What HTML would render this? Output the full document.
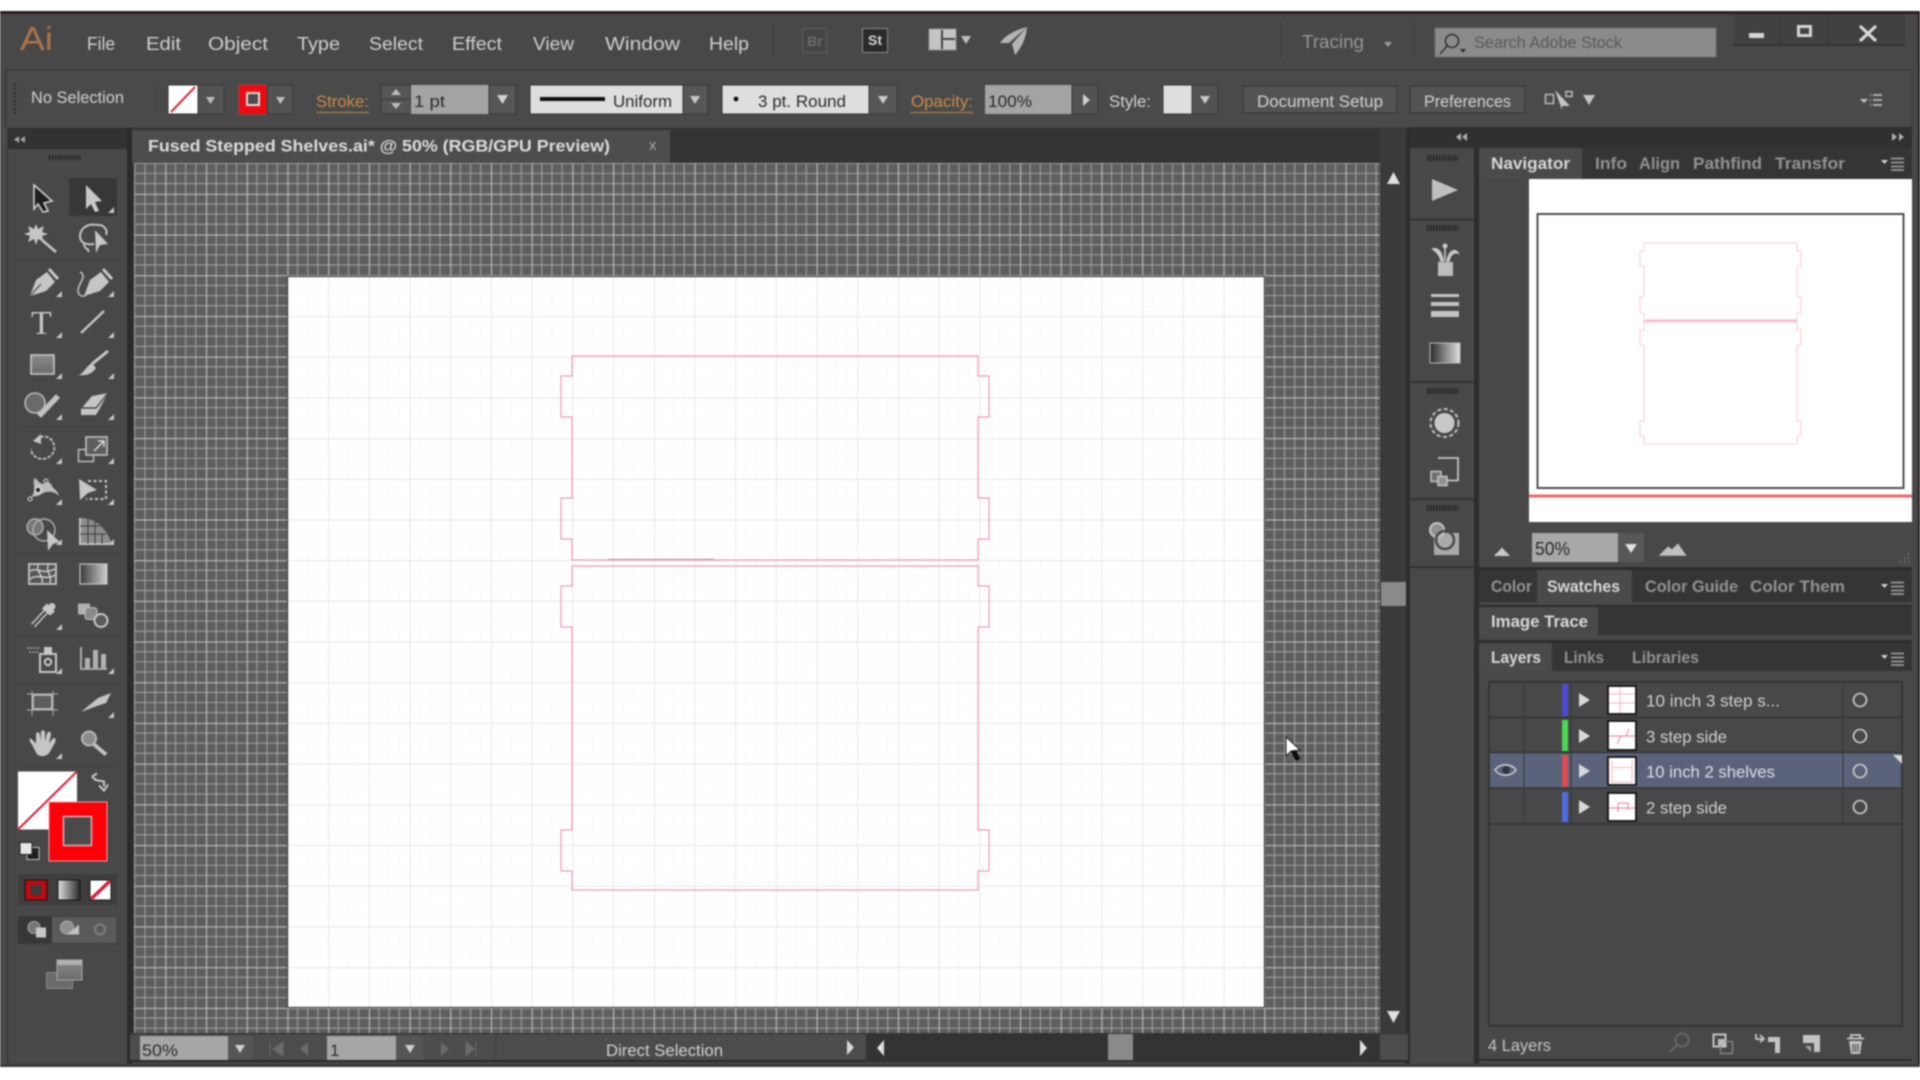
<!DOCTYPE html>
<html lang="en"><head><meta charset="utf-8"><title>Adobe Illustrator</title>
<style>
html,body{margin:0;padding:0;background:#fff;width:1920px;height:1080px;overflow:hidden}
svg{display:block;filter:blur(.7px)}
text{font-family:"Liberation Sans",sans-serif;white-space:pre}
.m{font-size:18px;fill:#cfcfcf}
.c{font-size:17px;fill:#d2d2d2}
.d{font-size:17px;fill:#2a2a2a}
.o{font-size:17px;fill:#c58a4a}
.ta{font-size:16.5px;font-weight:bold;fill:#d8d8d8}
.ti{font-size:16.5px;font-weight:bold;fill:#929292}
.l{font-size:17px;fill:#cfcfcf}
.i{fill:#c6c6c6}
.s{fill:none;stroke:#c6c6c6;stroke-width:2}
</style></head><body>
<svg width="1920" height="1080" viewBox="0 0 1920 1080" xmlns="http://www.w3.org/2000/svg">
<defs>
<pattern id="g1" patternUnits="userSpaceOnUse" x="206" y="275.2" width="40.7" height="40.7">
<rect width="40.7" height="40.7" fill="#5e5e5e"/>
<path d="M10.2 0V40.7M20.35 0V40.7M30.5 0V40.7M0 10.2H40.7M0 20.35H40.7M0 30.5H40.7" stroke="#a0a0a0" stroke-width="1.1"/>
<path d="M.5 0V40.7M0 .5H40.7" stroke="#bcbcbc" stroke-width="1.3"/>
</pattern>
<pattern id="g2" patternUnits="userSpaceOnUse" x="206" y="275.2" width="40.7" height="40.7">
<rect width="40.7" height="40.7" fill="#fff"/>
<path d="M10.2 0V40.7M20.35 0V40.7M30.5 0V40.7M0 10.2H40.7M0 20.35H40.7M0 30.5H40.7" stroke="#fafafa" stroke-width="1"/>
<path d="M.5 0V40.7M0 .5H40.7" stroke="#e9e9e9" stroke-width="1.2"/>
</pattern>
<linearGradient id="lg" x1="0" x2="1" y1="0" y2="0"><stop offset="0" stop-color="#2a2a2a"/><stop offset="1" stop-color="#e0e0e0"/></linearGradient>
<linearGradient id="lg2" x1="0" x2="1" y1="0" y2="0"><stop offset="0" stop-color="#3a3a3a"/><stop offset="1" stop-color="#d0d0d0"/></linearGradient>
<linearGradient id="lg3" x1="0" x2="0" y1="0" y2="1"><stop offset="0" stop-color="#8a8a8a"/><stop offset="1" stop-color="#6a6a6a"/></linearGradient>
</defs>

<!-- window frame -->
<rect x="0" y="11" width="1920" height="1056" fill="#484848"/>
<rect x="0" y="11" width="1920" height="3" fill="#2a1c22"/>
<rect x="1918" y="11" width="2" height="1056" fill="#241c20"/>
<rect x="0" y="1064" width="1920" height="3" fill="#3a3a3a"/>

<!-- title bar -->
<text x="20" y="50" style="font-size:33px;fill:#a87448" textLength="33" lengthAdjust="spacingAndGlyphs">Ai</text>
<text class="m" x="87" y="50" textLength="28" lengthAdjust="spacingAndGlyphs">File</text>
<text class="m" x="146" y="50" textLength="35" lengthAdjust="spacingAndGlyphs">Edit</text>
<text class="m" x="208" y="50" textLength="60" lengthAdjust="spacingAndGlyphs">Object</text>
<text class="m" x="297" y="50" textLength="43" lengthAdjust="spacingAndGlyphs">Type</text>
<text class="m" x="369" y="50" textLength="54" lengthAdjust="spacingAndGlyphs">Select</text>
<text class="m" x="452" y="50" textLength="50" lengthAdjust="spacingAndGlyphs">Effect</text>
<text class="m" x="533" y="50" textLength="41" lengthAdjust="spacingAndGlyphs">View</text>
<text class="m" x="605" y="50" textLength="75" lengthAdjust="spacingAndGlyphs">Window</text>
<text class="m" x="709" y="50" textLength="40" lengthAdjust="spacingAndGlyphs">Help</text>
<rect x="773" y="23" width="1" height="34" fill="#3b3b3b"/>
<rect x="802.5" y="28.5" width="24" height="24" fill="#454545" stroke="#5e5e5e"/>
<text x="807" y="46" style="font-size:14px;fill:#6a6a6a;font-weight:bold">Br</text>
<rect x="862.5" y="28.5" width="25" height="24" fill="#2b2b2b" stroke="#8a8a8a"/>
<text x="868" y="45" style="font-size:14px;fill:#d4d4d4;font-weight:bold">St</text>
<rect x="929" y="29" width="27" height="21" fill="#c4c4c4" stroke="#909090"/>
<path d="M942 30V49M942 39H955" stroke="#444" stroke-width="2"/>
<path d="M961 36h10l-5 8z" fill="#c0c0c0"/>
<path d="M1027 27C1015 30 1004 36 1000 43L1009 43Z" fill="#b4b4b4"/>
<path d="M1027 27L1012 44L1015 55C1022 47 1026 38 1027 27Z" fill="#b4b4b4"/>
<rect x="1280" y="22" width="1" height="35" fill="#3d3d3d"/>
<text x="1302" y="48" style="font-size:18px;fill:#969696" textLength="62" lengthAdjust="spacingAndGlyphs">Tracing</text>
<path d="M1384 42h8l-4 5z" fill="#a0a0a0"/>
<rect x="1414" y="22" width="1" height="35" fill="#3d3d3d"/>
<rect x="1435" y="28" width="281" height="29" fill="#8b8b8b" stroke="#6e6e6e"/>
<circle cx="1452" cy="41" r="6.5" fill="none" stroke="#333" stroke-width="1.6"/>
<path d="M1447 46L1440 54" stroke="#333" stroke-width="1.6"/>
<path d="M1460 49h6l-3 4z" fill="#333"/>
<text x="1474" y="48" style="font-size:16.5px;fill:#5a5a5a" textLength="148" lengthAdjust="spacingAndGlyphs">Search Adobe Stock</text>
<path d="M1733 14V40Q1733 45 1738 45H1905V14Z" fill="#414141"/>
<path d="M1733 45H1905" stroke="#2f2f2f" stroke-width="1.5"/>
<path d="M1780.5 14V45M1827.5 14V45" stroke="#333"/>
<rect x="1749" y="33" width="15" height="5" fill="#d4d4d4"/>
<rect x="1798.5" y="26.5" width="12" height="9" fill="none" stroke="#d4d4d4" stroke-width="3"/>
<path d="M1860 26L1876 41M1876 26L1860 41" stroke="#d8d8d8" stroke-width="3.2"/>

<!-- control bar -->
<rect x="6" y="70" width="1906" height="58" fill="#4a4a4a" stroke="#353535"/>
<path d="M15 84V116" stroke="#2c2c2c" stroke-width="2" stroke-dasharray="2 2"/>
<text class="c" x="31" y="103" textLength="93" lengthAdjust="spacingAndGlyphs">No Selection</text>
<rect x="155" y="84" width="1" height="30" fill="#414141"/>
<rect x="168" y="85" width="30" height="29" fill="#fff" stroke="#333"/>
<path d="M171 112L195 87" stroke="#d8283c" stroke-width="2"/>
<rect x="198" y="85" width="26" height="29" fill="#525252" stroke="#3a3a3a"/>
<path d="M206 97h9l-4.500 7z" fill="#bdbdbd"/>
<rect x="239" y="85" width="28" height="29" fill="#ee0a12" stroke="#b33"/>
<rect x="247" y="93" width="12" height="12" fill="#4c4c4c" stroke="#f0dada" stroke-width="2"/>
<rect x="267" y="85" width="26" height="29" fill="#525252" stroke="#3a3a3a"/>
<path d="M276 97h9l-4.500 7z" fill="#bdbdbd"/>
<text class="o" x="316" y="107" textLength="53" lengthAdjust="spacingAndGlyphs">Stroke:</text>
<path d="M317 112.500H369" stroke="#c58a4a" stroke-width="1.500" stroke-dasharray="2 1"/>
<rect x="381" y="85" width="30" height="29" fill="#555" stroke="#383838"/>
<path d="M381 99.500H411" stroke="#383838"/>
<path d="M391 95l5-6 5 6zM391 103l5 6 5-6z" fill="#bdbdbd"/>
<rect x="411" y="85" width="78" height="29" fill="#a4a4a4"/>
<text class="d" x="414" y="107" textLength="31" lengthAdjust="spacingAndGlyphs">1 pt</text>
<rect x="489" y="85" width="27" height="29" fill="#565656" stroke="#383838"/>
<path d="M497 95h11l-5.500 9z" fill="#d0d0d0"/>
<rect x="530" y="85" width="153" height="29" fill="#dedede" stroke="#2f2f2f"/>
<rect x="540" y="97" width="65" height="4" fill="#111"/>
<text class="d" x="613" y="107" textLength="59" lengthAdjust="spacingAndGlyphs">Uniform</text>
<rect x="683" y="85" width="25" height="29" fill="#565656" stroke="#383838"/>
<path d="M690 96h10l-5 8z" fill="#c8c8c8"/>
<rect x="722" y="85" width="147" height="29" fill="#dedede" stroke="#2f2f2f"/>
<circle cx="736" cy="99" r="2.400" fill="#111"/>
<text class="d" x="758" y="107" textLength="88" lengthAdjust="spacingAndGlyphs">3 pt. Round</text>
<rect x="869" y="85" width="28" height="29" fill="#565656" stroke="#383838"/>
<path d="M878 96h10l-5 8z" fill="#c8c8c8"/>
<text class="o" x="911" y="107" textLength="62" lengthAdjust="spacingAndGlyphs">Opacity:</text>
<path d="M911 112.500H973" stroke="#c58a4a" stroke-width="1.500" stroke-dasharray="2 1"/>
<rect x="985" y="85" width="87" height="29" fill="#a4a4a4"/>
<text class="d" x="988" y="107" textLength="44" lengthAdjust="spacingAndGlyphs">100%</text>
<rect x="1072" y="85" width="26" height="29" fill="#525252" stroke="#383838"/>
<path d="M1083 94l7 6-7 6z" fill="#cfcfcf"/>
<text class="c" x="1109" y="107" textLength="42" lengthAdjust="spacingAndGlyphs">Style:</text>
<rect x="1163" y="85" width="29" height="29" fill="#dedede" stroke="#383838"/>
<rect x="1192" y="85" width="26" height="29" fill="#525252" stroke="#383838"/>
<path d="M1200 96h10l-5 8z" fill="#c8c8c8"/>
<rect x="1243" y="86" width="154" height="27" fill="#535353" stroke="#333"/>
<text class="c" x="1257" y="107" textLength="126" lengthAdjust="spacingAndGlyphs">Document Setup</text>
<rect x="1410" y="86" width="115" height="27" fill="#535353" stroke="#333"/>
<text class="c" x="1424" y="107" textLength="87" lengthAdjust="spacingAndGlyphs">Preferences</text>
<g transform="translate(-1,2)">
<path d="M1546.500 92.500h8v9h-8zM1567 89.500h6v5h-6z" fill="none" stroke="#b8b8b8" stroke-width="1.600"/>
<path d="M1556 88L1571 104L1563 104L1563 108Z" fill="#c4c4c4"/>
<path d="M1584 93h12l-6 10z" fill="#c4c4c4"/>
</g>
<g transform="translate(-3,1)">
<path d="M1876 94h9M1876 99h9M1876 104h9" stroke="#b8b8b8" stroke-width="1.800"/>
<path d="M1863 98h8l-4 4z" fill="#c0c0c0"/>
<path d="M1873 94h1M1873 99h1M1873 104h1" stroke="#b8b8b8" stroke-width="1.800"/>
</g>

<!-- doc tab row -->
<rect x="7" y="128" width="1403" height="35" fill="#343434"/>
<rect x="7" y="128" width="120" height="21" fill="#323232"/>
<rect x="132" y="130" width="538" height="33" fill="#4d4d4d"/>
<text x="148" y="151.500" style="font-size:17px;font-weight:bold;fill:#dcdcdc" textLength="462" lengthAdjust="spacingAndGlyphs">Fused Stepped Shelves.ai* @ 50% (RGB/GPU Preview)</text>
<text x="649" y="150" style="font-size:15px;fill:#a8a8a8">x</text>
<path d="M19 136l-5 3.500 5 3.500zM25 136l-5 3.500 5 3.500z" fill="#a0a0a0"/>

<!-- tool panel -->
<rect x="0" y="128" width="7" height="936" fill="#4a4a4a"/>
<rect x="7" y="128" width="1.500" height="936" fill="#333"/>
<rect x="8" y="149" width="119" height="912" fill="#484848"/>
<rect x="127" y="128" width="5" height="936" fill="#2b2b2b"/>
<path d="M49 157.500H82" stroke="#252525" stroke-width="5" stroke-dasharray="1.500 1.500"/>
<rect x="69" y="178" width="48" height="38" fill="#373737"/>
<path d="M18 260.500H118M18 426.500H118M18 553.500H118M18 636.500H118M18 683.500H118M18 766H118" stroke="#3e3e3e"/>
<!-- tool triangles -->
<path class="i" d="M108 213l6-6v6zM56 297l6-6v6zM108 297l6-6v6zM56 338l6-6v6zM108 338l6-6v6zM56 379l6-6v6zM108 379l6-6v6zM56 420l6-6v6zM108 420l6-6v6zM56 464l6-6v6zM108 464l6-6v6zM56 505l6-6v6zM108 505l6-6v6zM56 545l6-6v6zM108 545l6-6v6zM56 630l6-6v6zM56 674l6-6v6zM108 674l6-6v6zM108 718l6-6v6zM56 759l6-6v6z"/>
<!-- selection -->
<path d="M34 185L52 201L44 203L48 211L43 212L38 204L34 209Z" fill="#1e1e1e" stroke="#cfcfcf" stroke-width="1.600"/>
<path d="M86 185L102 201L95 202L99 211L95 212L91 204L86 209Z" fill="#c8c8c8"/>
<!-- wand -->
<path class="i" d="M36 224l2 5 6-3-2 6 6 2-6 2 2 6-6-3-2 6-2-6-6 3 2-6-6-2 6-2-2-6 6 3z"/>
<path d="M42 240L56 252" stroke="#c6c6c6" stroke-width="2.600"/>
<!-- lasso -->
<path class="s" d="M96 225C86 223 80 230 80 236C80 244 88 245 94 244M96 225C104 224 108 230 106 235M84 244C84 250 90 248 88 252"/>
<path class="i" d="M95 230L108 244L100 245L96 253Z"/>
<!-- pen -->
<path class="i" d="M30 296L36 280L47 272L55 282L46 291Z"/>
<path d="M49 269L58 279" stroke="#c6c6c6" stroke-width="3"/>
<path d="M31 295L41 284" stroke="#484848" stroke-width="1.200"/>
<!-- curvature pen -->
<path class="i" d="M84 296L90 280L101 272L109 282L100 291Z"/>
<path d="M103 269L112 279" stroke="#c6c6c6" stroke-width="3"/>
<path d="M80 272C88 276 78 284 78 290C78 297 84 297 86 295" fill="none" stroke="#bcbcbc" stroke-width="1.600"/>
<!-- type -->
<text x="31" y="334" style="font-family:'Liberation Serif',serif;font-size:34px;fill:#c6c6c6">T</text>
<path d="M81 333L104 311" stroke="#c6c6c6" stroke-width="2.400"/>
<!-- rect -->
<rect x="31" y="355" width="23" height="19" fill="url(#lg3)" stroke="#c6c6c6" stroke-width="1.600"/>
<!-- brush -->
<path d="M92 364L108 351" stroke="#c6c6c6" stroke-width="3"/>
<path class="i" d="M78 375C84 374 86 366 92 363L96 368C92 374 86 376 78 375Z"/>
<!-- shaper -->
<circle cx="35" cy="403" r="10" fill="#6a6a6a" stroke="#b8b8b8" stroke-width="1.600"/>
<path d="M39 416L58 396" stroke="#c2c2c2" stroke-width="5.500"/>
<!-- eraser -->
<path class="i" d="M81 409L92 396L108 393L100 408L96 415H81Z"/>
<path d="M81 408H96L108 393" stroke="#484848" fill="none" stroke-width="1.400"/>
<!-- rotate -->
<path d="M36 440C42 434 52 436 54 445C56 452 50 459 42 459C36 459 31 454 31 449" fill="none" stroke="#c6c6c6" stroke-width="1.800" stroke-dasharray="3.500 1.500"/>
<path class="i" d="M33 441L41 434V444Z"/>
<!-- scale -->
<rect x="78.500" y="449.500" width="15" height="12" fill="none" stroke="#b4b4b4" stroke-width="1.600"/>
<rect x="86" y="437" width="21" height="18" fill="#5e5e5e" stroke="#c0c0c0" stroke-width="1.600"/>
<path d="M94 451L104 441M98 441H104V447" fill="none" stroke="#ddd" stroke-width="1.400"/>
<!-- warp -->
<path d="M31 497C38 490 31 482 35 478C38 480 40 486 46 483C50 481 52 485 53 488C56 490 58 492 59 496C54 491 48 491 43 493C38 497 35 496 31 497Z" fill="#bcbcbc"/>
<circle cx="38" cy="490" r="3" fill="#222" stroke="#e0e0e0" stroke-width="1.600"/>
<circle cx="30" cy="499" r="2" fill="none" stroke="#ddd"/>
<circle cx="46" cy="481" r="2" fill="none" stroke="#ddd"/>
<!-- free transform -->
<path class="i" d="M79 479L97 490L88 493L80 500Z"/>
<path d="M88 481H106V499H86" fill="none" stroke="#c6c6c6" stroke-width="2" stroke-dasharray="3 2.500"/>
<!-- shape builder -->
<circle cx="35" cy="527" r="8" fill="#777" stroke="#b0b0b0" stroke-width="1.400"/>
<circle cx="44" cy="530" r="11" fill="none" stroke="#b0b0b0" stroke-width="1.400"/>
<path class="i" d="M47 530L60 542L53 544L48 551Z"/>
<!-- perspective grid -->
<path d="M80 518V544H112" fill="none" stroke="#c6c6c6" stroke-width="2"/>
<path class="i" d="M80 518C96 518 106 528 112 544H80Z" opacity=".55"/>
<path d="M88 519V544M95 522V544M80 526H100M80 534H106M102 534V544" stroke="#484848" stroke-width="1.200"/>
<!-- mesh -->
<g transform="translate(0,1)">
<rect x="29" y="563" width="27" height="20" fill="#565656" stroke="#c4c4c4" stroke-width="1.800"/>
<path d="M30 570C38 566 42 574 55 568M30 578C38 572 46 580 55 574M38 564C36 572 44 574 42 582M48 564C46 572 52 574 50 582" fill="none" stroke="#d0d0d0" stroke-width="1.400"/>
<rect x="80" y="563" width="27" height="20" fill="url(#lg2)" stroke="#c4c4c4" stroke-width="1.200"/>
</g>
<!-- eyedropper / blend -->
<g transform="translate(0,3.500)">
<path d="M33 622L46 608" stroke="#c6c6c6" stroke-width="5.500"/>
<path d="M33 622L46 608" stroke="#484848" stroke-width="2.500"/>
<path class="i" d="M47 600L55 608L50 612L42 605Z"/>
<circle cx="52" cy="603" r="3.500" class="i"/>
<rect x="78" y="600" width="12" height="11" fill="#b0b0b0"/>
<rect x="85" y="604" width="12" height="12" rx="3" fill="#8a8a8a" stroke="#c0c0c0"/>
<circle cx="101" cy="617" r="6.500" fill="#5a5a5a" stroke="#c6c6c6" stroke-width="2"/>
</g>
<!-- spray / graph -->
<g transform="translate(0,4)">
<rect x="40" y="650" width="16" height="18" fill="none" stroke="#c6c6c6" stroke-width="2"/>
<circle cx="48" cy="658" r="3.200" fill="none" stroke="#c6c6c6" stroke-width="2"/>
<rect x="44" y="643" width="8" height="6" class="i"/>
<path d="M27 644H40M29 648H38" stroke="#a8a8a8" stroke-width="1.600" stroke-dasharray="2 1.500"/>
<path d="M81 643V665H107" fill="none" stroke="#c0c0c0" stroke-width="1.600"/>
<path d="M85 654h5v11h-5zM93 646h5v19h-5zM101 650h5v15h-5z" fill="#b0b0b0"/>
</g>
<!-- artboard / slice -->
<g transform="translate(0,5)">
<rect x="33" y="690" width="19" height="14" fill="#5e5e5e" stroke="#c0c0c0" stroke-width="1.600"/>
<path d="M27 705H58M32 686V711M53 686V711M27 689H58" stroke="#b0b0b0" stroke-width="1"/>
<path class="i" d="M81 707L98 693L111 688L106 698L94 702Z"/>
</g>
<!-- hand / zoom -->
<g transform="translate(0,6.500)">
<path class="i" d="M32 738C29 734 29 732 31 732L36 737V728C36 725 39 725 40 728L41 735V726C41 723 45 723 45 726V735L47 727C48 724 51 725 51 728L49 737L52 733C54 730 57 732 55 736L50 745C47 751 38 751 36 746Z"/>
<circle cx="89" cy="732" r="7" fill="#8a8a8a" stroke="#b8b8b8" stroke-width="2"/>
<path d="M94 738L106 748" stroke="#c0c0c0" stroke-width="4"/>
</g>
<!-- fill/stroke -->
<rect x="18" y="771.500" width="59" height="58" fill="#fff"/>
<path d="M18 829.500L77 771.500" stroke="#d8203a" stroke-width="2"/>
<rect x="49" y="802" width="58" height="59" fill="#fb0008" stroke="#f2a0a0"/>
<rect x="63.500" y="816.500" width="28" height="29" fill="#4a4a4a" stroke="#f2b8b8" stroke-width="1.400"/>
<g transform="translate(0,8.500)">
<path d="M92 768C96 773 100 772 104 773V778M108 776L104 782L99 777M92 768L97 765M92 768L96 772" fill="none" stroke="#c6c6c6" stroke-width="2"/>
</g>
<g transform="translate(0,9.500)">
<rect x="27" y="838" width="12" height="12" fill="#1f1f1f" stroke="#c6c6c6" stroke-width="1"/>
<rect x="20" y="833" width="12" height="12" fill="#e6e6e6" stroke="#222"/>
</g>
<rect x="18" y="874" width="99" height="31" fill="#3e3e3e"/>
<rect x="25" y="880" width="22" height="20" fill="#c00810" stroke="#141414"/>
<rect x="30.500" y="885" width="11" height="10" fill="#3c3c3c"/>
<rect x="58" y="880" width="22" height="20" fill="url(#lg)" stroke="#141414" transform="rotate(180 69 890)"/>
<rect x="90" y="880" width="21" height="20" fill="#fff" stroke="#141414"/>
<path d="M91 899L110 881" stroke="#d8203a" stroke-width="3.500"/>
<g transform="translate(0,12.500)">
<rect x="18" y="904" width="99" height="27" fill="#5a5a5a" stroke="#3e3e3e"/>
<rect x="18" y="904" width="34" height="27" fill="#373737"/>
<circle cx="34" cy="915" r="6" fill="#777" stroke="#aaa"/>
<rect x="36" y="915" width="10" height="10" class="i"/>
<circle cx="67" cy="915" r="6.500" fill="#909090" stroke="#aaa"/>
<path d="M67 922H79V912Z" fill="#c0c0c0"/>
<circle cx="100" cy="917" r="5" fill="none" stroke="#7e7e7e" stroke-width="2"/>
</g>
<g transform="translate(0,14)">
<rect x="46.500" y="958.500" width="26" height="16" fill="#6a6a6a" stroke="#8a8a8a"/>
<rect x="57" y="946" width="25" height="20" fill="url(#lg3)" stroke="#a8a8a8"/>
<rect x="57" y="946" width="25" height="5" fill="#b0b0b0"/>
</g>

<!-- canvas -->
<rect x="132" y="163" width="1248" height="870" fill="url(#g1)"/>
<rect x="132" y="163" width="2" height="870" fill="#333"/>
<rect x="287.500" y="276.500" width="977" height="731" fill="url(#g2)" stroke="#3a3a3a" stroke-width="1.200"/>
<g fill="none" stroke="#ee9cb2" stroke-width="1.200">
<path d="M572 356H978V376H989V417H978V498H989V539H978V560H572V539H561V498H572V417H561V376H572Z"/>
<path d="M572 566H978V586H989V627H978V830H989V871H978V890H572V871H561V830H572V627H561V586H572Z"/>
</g>
<path d="M608 559.500H715" stroke="#d28ca0" stroke-width="1.200"/>
<!-- cursor -->
<path d="M1292 748L1298 760" stroke="#0c0c0c" stroke-width="5"/>
<path d="M1286 737L1286 756L1291 751L1300 750Z" fill="#fff" stroke="#222" stroke-width="1"/>

<!-- v scrollbar -->
<rect x="1380" y="128" width="28" height="905" fill="#3a3a3a"/>
<path d="M1387 184l6.500-12 6.500 12z" fill="#e0e0e0"/>
<path d="M1387 1011l6.500 12 6.500-12z" fill="#e0e0e0"/>
<rect x="1381" y="582" width="25" height="24" fill="#8a8a8a"/>
<rect x="1406" y="128" width="4" height="936" fill="#2d2d2d"/>

<!-- status bar -->
<rect x="130" y="1033" width="1278" height="28" fill="#4c4c4c"/>
<rect x="130" y="1033" width="1278" height="1.500" fill="#393939"/>
<rect x="130" y="1060" width="1280" height="2" fill="#2a2a2a"/>
<rect x="140" y="1036" width="88" height="24" fill="#a6a6a6"/>
<text x="142" y="1056" style="font-size:17px;fill:#2c2c2c" textLength="36" lengthAdjust="spacingAndGlyphs">50%</text>
<rect x="228" y="1036" width="25" height="24" fill="#555"/>
<path d="M235 1045h10l-5 8z" fill="#d0d0d0"/>
<path d="M270 1042v14M283 1042v14l-10-7z" stroke="#6a6a6a" fill="#6a6a6a"/>
<path d="M308 1042v14l-8-7z" fill="#6a6a6a"/>
<rect x="327" y="1036" width="69" height="24" fill="#a6a6a6"/>
<text x="330" y="1056" style="font-size:17px;fill:#2c2c2c">1</text>
<rect x="396" y="1036" width="27" height="24" fill="#555"/>
<path d="M405 1045h10l-5 8z" fill="#d0d0d0"/>
<path d="M441 1042v14l8-7z" fill="#6a6a6a"/>
<path d="M466 1042v14l8-7zM476 1042v14" stroke="#6a6a6a" fill="#6a6a6a"/>
<rect x="495" y="1036" width="1" height="24" fill="#404040"/>
<text x="606" y="1056" style="font-size:17px;fill:#d0d0d0" textLength="117" lengthAdjust="spacingAndGlyphs">Direct Selection</text>
<path d="M847 1040v15l7-7.500z" fill="#d8d8d8"/>
<rect x="866" y="1033" width="514" height="28" fill="#333"/>
<path d="M884 1040v16l-7-8z" fill="#e0e0e0"/>
<path d="M1360 1040v16l7-8z" fill="#e0e0e0"/>
<rect x="1108" y="1034" width="25" height="26" fill="#8a8a8a"/>

<!-- right panel top row -->
<rect x="1410" y="127" width="502" height="21" fill="#303030"/>
<path d="M1461 133l-5 4 5 4zM1467 133l-5 4 5 4z" fill="#b0b0b0"/>
<path d="M1892 133l5 4-5 4zM1899 133l5 4-5 4z" fill="#b0b0b0"/>

<!-- icon dock -->
<rect x="1410" y="148" width="64" height="916" fill="#484848"/>
<path d="M1410 219.500H1474M1410 382H1474M1410 499H1474M1410 567H1474" stroke="#333" stroke-width="2"/>
<path d="M1427 158H1458M1427 228H1458M1427 391H1458M1427 508H1458" stroke="#222" stroke-width="6" stroke-dasharray="1.500 1.500"/>
<path d="M1432 179L1458 190L1432 201Z" fill="#c0c0c0"/>
<path d="M1438 262h15v14h-15z" fill="#bdbdbd"/>
<path d="M1441 261C1440 254 1436 252 1433 249C1438 248 1442 252 1443 261ZM1445 261V245M1449 261C1450 254 1454 252 1458 253C1455 248 1449 251 1447 261Z" fill="#c8c8c8" stroke="#c8c8c8" stroke-width="1.600"/>
<circle cx="1445" cy="246" r="2.500" fill="#c8c8c8"/>
<rect x="1431" y="294" width="28" height="3" fill="#c4c4c4"/>
<rect x="1431" y="302" width="28" height="4" fill="#c4c4c4"/>
<rect x="1431" y="311" width="28" height="6" fill="#c4c4c4"/>
<rect x="1430" y="343" width="30" height="20" fill="url(#lg)" stroke="#bbb"/>
<circle cx="1444.500" cy="423" r="10" fill="#c8c8c8"/>
<circle cx="1444.500" cy="423" r="14" fill="none" stroke="#c0c0c0" stroke-width="2" stroke-dasharray="4 2.500"/>
<g transform="translate(0,-2.500)">
<path d="M1438 460.500H1458V483H1439" fill="none" stroke="#c4c4c4" stroke-width="1.800"/>
<rect x="1431" y="474" width="10" height="10" fill="#707070" stroke="#c4c4c4" stroke-width="1.500"/>
<rect x="1438" y="479" width="9" height="9" fill="#909090" stroke="#c4c4c4" stroke-width="1.500"/>
</g>
<rect x="1434" y="533" width="25" height="22" fill="#aaa"/>
<circle cx="1437" cy="530" r="7" fill="#909090" stroke="#c4c4c4" stroke-width="2"/>
<circle cx="1445" cy="540" r="9" fill="none" stroke="#484848" stroke-width="2.500"/>

<!-- main panel column -->
<rect x="1474" y="148" width="5" height="916" fill="#2d2d2d"/>
<rect x="1479" y="148" width="433" height="916" fill="#484848"/>

<!-- navigator -->
<rect x="1479" y="148" width="433" height="31" fill="#353535"/>
<rect x="1479" y="148" width="103" height="31" fill="#4a4a4a"/>
<text class="ta" x="1491" y="169" textLength="79" lengthAdjust="spacingAndGlyphs">Navigator</text>
<text class="ti" x="1595" y="169" textLength="32" lengthAdjust="spacingAndGlyphs">Info</text>
<text class="ti" x="1639" y="169" textLength="41" lengthAdjust="spacingAndGlyphs">Align</text>
<text class="ti" x="1693" y="169" textLength="69" lengthAdjust="spacingAndGlyphs">Pathfind</text>
<text class="ti" x="1775" y="169" textLength="70" lengthAdjust="spacingAndGlyphs">Transfor</text>
<path d="M1881 160h7l-3.500 4z" fill="#d0d0d0"/>
<path d="M1891 158.500h13M1891 162.500h13M1891 166.500h13M1891 170h13" stroke="#a8a8a8" stroke-width="1.500"/>
<rect x="1529" y="179" width="383" height="343" fill="#fff"/>
<rect x="1537.500" y="214" width="366" height="274" fill="#fff" stroke="#3c3c3c" stroke-width="1.800"/>
<path d="M1529 496H1912" stroke="#f0656d" stroke-width="3"/>
<g fill="none" stroke="#fcd0d8" stroke-width="1.100">
<path d="M1644 243H1797V251H1801V266H1797V297H1801V313H1797V320H1644V313H1640V297H1644V266H1640V251H1644Z"/>
<path d="M1644 322H1797V330H1801V345H1797V421H1801V436H1797V444H1644V436H1640V421H1644V345H1640V330H1644Z"/>
</g>
<path d="M1644 320.500H1797" stroke="#fbb8c2" stroke-width="2"/>
<path d="M1494 556C1497 552 1500 551 1502 547C1504 551 1507 552 1510 556Z" fill="#c8c8c8"/>
<rect x="1532" y="533" width="86" height="29" fill="#a8a8a8"/>
<text x="1535" y="555" style="font-size:18px;fill:#2a2a2a" textLength="35" lengthAdjust="spacingAndGlyphs">50%</text>
<rect x="1618" y="533" width="26" height="29" fill="#575757"/>
<path d="M1625 544h12l-6 9z" fill="#e0e0e0"/>
<path d="M1658 556L1668 546L1672 549L1678 543L1687 556Z" fill="#c0c0c0" stroke="#484848" stroke-width=".6"/>
<path d="M1900 562h1M1904 562h1M1908 562h1M1904 558h1M1908 558h1M1908 554h1" stroke="#888" stroke-width="1.500"/>

<!-- swatches group -->
<rect x="1474" y="567" width="438" height="3" fill="#2d2d2d"/>
<rect x="1479" y="570" width="433" height="32" fill="#353535"/>
<rect x="1537" y="570" width="95" height="32" fill="#4a4a4a"/>
<text class="ti" x="1491" y="592" textLength="41" lengthAdjust="spacingAndGlyphs">Color</text>
<text class="ta" x="1547" y="592" textLength="73" lengthAdjust="spacingAndGlyphs">Swatches</text>
<text class="ti" x="1645" y="592" textLength="93" lengthAdjust="spacingAndGlyphs">Color Guide</text>
<text class="ti" x="1750" y="592" textLength="95" lengthAdjust="spacingAndGlyphs">Color Them</text>
<path d="M1881 584h7l-3.500 4z" fill="#d0d0d0"/>
<path d="M1891 582.500h13M1891 586.500h13M1891 590.500h13M1891 594h13" stroke="#a8a8a8" stroke-width="1.500"/>
<rect x="1474" y="605" width="438" height="2" fill="#2d2d2d"/>
<rect x="1479" y="607" width="433" height="28" fill="#353535"/>
<rect x="1479" y="607" width="119" height="28" fill="#4a4a4a"/>
<text class="ta" x="1491" y="627" textLength="97" lengthAdjust="spacingAndGlyphs">Image Trace</text>
<rect x="1474" y="640" width="438" height="3" fill="#2d2d2d"/>
<rect x="1479" y="643" width="433" height="28" fill="#353535"/>
<rect x="1479" y="643" width="73" height="28" fill="#4a4a4a"/>
<text class="ta" x="1491" y="663" textLength="50" lengthAdjust="spacingAndGlyphs">Layers</text>
<text class="ti" x="1564" y="663" textLength="40" lengthAdjust="spacingAndGlyphs">Links</text>
<text class="ti" x="1632" y="663" textLength="67" lengthAdjust="spacingAndGlyphs">Libraries</text>
<path d="M1881 655h7l-3.500 4z" fill="#d0d0d0"/>
<path d="M1891 653.500h13M1891 657.500h13M1891 661.500h13M1891 665h13" stroke="#a8a8a8" stroke-width="1.500"/>

<!-- layers list -->
<rect x="1489" y="682" width="413" height="344" fill="#484848" stroke="#2f2f2f" stroke-width="1.500"/>
<rect x="1490" y="753" width="411" height="35" fill="#5a6379"/>
<path d="M1490 717.500H1902M1490 752.500H1902M1490 788H1902M1490 824H1902" stroke="#343434" stroke-width="1.500"/>
<path d="M1524 683V824M1843 683V824M1571 683V824" stroke="#3a3a3a" stroke-width="1.200"/>
<rect x="1562" y="684" width="6" height="32" fill="#4a4ad8"/>
<rect x="1562" y="720" width="6" height="31" fill="#49d84f"/>
<rect x="1562" y="755" width="6" height="32" fill="#e04a50"/>
<rect x="1562" y="792" width="6" height="30" fill="#4a6fe0"/>
<path d="M1579 693V707L1590 700ZM1579 729V743L1590 736ZM1579 764V778L1590 771ZM1579 800V814L1590 807Z" fill="#d8d8d8"/>
<rect x="1608" y="686" width="28" height="28" fill="#fff" stroke="#111" stroke-width="1.800"/>
<path d="M1609 694H1635M1609 703H1635M1620 687V713" stroke="#f5b4bd" stroke-width="1"/>
<rect x="1608" y="721" width="28" height="29" fill="#fff" stroke="#111" stroke-width="1.800"/>
<path d="M1609 736H1635M1617 744L1621 736H1626L1629 729" fill="none" stroke="#ee8090" stroke-width="1"/>
<rect x="1608" y="757" width="28" height="28" fill="#fff" stroke="#111" stroke-width="1.800"/>
<path d="M1612 767.500H1632M1612 761V782H1632V761" fill="none" stroke="#f5b4bd" stroke-width="1"/>
<rect x="1608" y="793" width="28" height="28" fill="#fff" stroke="#111" stroke-width="1.800"/>
<path d="M1609 808H1635M1618 812V803H1628V810" fill="none" stroke="#ee8090" stroke-width="1"/>
<text class="l" x="1646" y="706.500" textLength="134" lengthAdjust="spacingAndGlyphs">10 inch 3 step s...</text>
<text class="l" x="1646" y="742.500" textLength="81" lengthAdjust="spacingAndGlyphs">3 step side</text>
<text class="l" x="1646" y="777.500" textLength="129" lengthAdjust="spacingAndGlyphs" style="fill:#dde">10 inch 2 shelves</text>
<text class="l" x="1646" y="813.500" textLength="81" lengthAdjust="spacingAndGlyphs">2 step side</text>
<g fill="none" stroke="#d0d0d0" stroke-width="1.600">
<circle cx="1860" cy="700" r="6.500"/><circle cx="1860" cy="736" r="6.500"/><circle cx="1860" cy="771" r="6.500"/><circle cx="1860" cy="807" r="6.500"/>
</g>
<path d="M1893 755H1902V764Z" fill="#d8d8d8"/>
<path d="M1495 770C1500 763 1511 763 1516 770C1511 777 1500 777 1495 770Z" fill="#5a6379" stroke="#d4d4d4" stroke-width="1.500"/>
<circle cx="1506" cy="770" r="3.800" fill="#2e3444"/>
<!-- layers footer -->
<text x="1488" y="1051" style="font-size:17px;fill:#c4c4c4" textLength="63" lengthAdjust="spacingAndGlyphs">4 Layers</text>
<circle cx="1682" cy="1040" r="6.500" fill="none" stroke="#6c6c6c" stroke-width="1.600"/>
<path d="M1677 1045L1670 1052" stroke="#6c6c6c" stroke-width="1.600"/>
<rect x="1713.500" y="1034.500" width="12" height="12" fill="none" stroke="#c4c4c4" stroke-width="2"/>
<rect x="1720.500" y="1041.500" width="12" height="12" fill="none" stroke="#808080" stroke-width="1.500"/>
<rect x="1718" y="1039" width="7" height="7" fill="#bbb"/>
<path d="M1756 1034V1039H1764M1760 1035L1764 1039L1760 1042" fill="none" stroke="#c4c4c4" stroke-width="1.800"/>
<path d="M1768 1037H1780V1053H1775V1042H1768Z" fill="#c4c4c4"/>
<path d="M1803 1035H1820V1052H1814V1043H1803Z" fill="#c4c4c4"/>
<path d="M1805 1046L1811 1052V1046Z" fill="#a0a0a0"/>
<path d="M1847 1038.500H1864M1851 1038V1035H1860V1038" fill="none" stroke="#c8c8c8" stroke-width="1.800"/>
<path d="M1849 1041H1862L1860 1054H1851Z" fill="#c4c4c4"/>
<path d="M1853 1044V1052M1855.500 1044V1052M1858 1044V1052" stroke="#484848" stroke-width="1.200"/>
<rect x="1479" y="1059" width="433" height="2" fill="#2d2d2d"/>
<rect x="1479" y="1061" width="439" height="3" fill="#484848"/>
</svg>
</body></html>
